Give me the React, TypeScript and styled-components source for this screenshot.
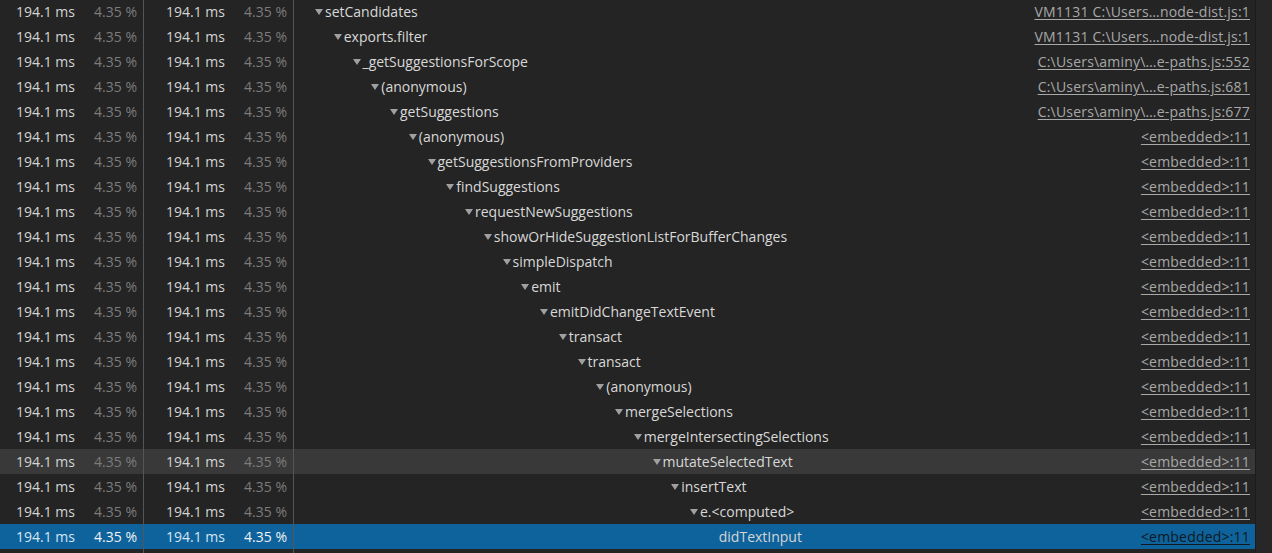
import React from 'react'
import styled, { createGlobalStyle, css } from 'styled-components'

const GlobalStyle = createGlobalStyle`
	html, body {
		margin: 0;
		padding: 0;
		background: #242424;
		overflow: hidden;
	}
	body {
		font-family: "Open Sans", "Noto Sans", "Liberation Sans", sans-serif;
		font-size: 14px;
	}
`

const INDENT = 18.75

type Frame = {
	name: string
	depth: number
	url: string
	leaf?: boolean
}

const VM = 'VM1131 C:\\Users…node-dist.js:1'
const PATHS = 'C:\\Users\\aminy\\…e-paths.js:'
const EMB = '<embedded>:11'

const frames: Frame[] = [
	{ name: 'setCandidates', depth: 0, url: VM },
	{ name: 'exports.filter', depth: 1, url: VM },
	{ name: '_getSuggestionsForScope', depth: 2, url: PATHS + '552' },
	{ name: '(anonymous)', depth: 3, url: PATHS + '681' },
	{ name: 'getSuggestions', depth: 4, url: PATHS + '677' },
	{ name: '(anonymous)', depth: 5, url: EMB },
	{ name: 'getSuggestionsFromProviders', depth: 6, url: EMB },
	{ name: 'findSuggestions', depth: 7, url: EMB },
	{ name: 'requestNewSuggestions', depth: 8, url: EMB },
	{ name: 'showOrHideSuggestionListForBufferChanges', depth: 9, url: EMB },
	{ name: 'simpleDispatch', depth: 10, url: EMB },
	{ name: 'emit', depth: 11, url: EMB },
	{ name: 'emitDidChangeTextEvent', depth: 12, url: EMB },
	{ name: 'transact', depth: 13, url: EMB },
	{ name: 'transact', depth: 14, url: EMB },
	{ name: '(anonymous)', depth: 15, url: EMB },
	{ name: 'mergeSelections', depth: 16, url: EMB },
	{ name: 'mergeIntersectingSelections', depth: 17, url: EMB },
	{ name: 'mutateSelectedText', depth: 18, url: EMB },
	{ name: 'insertText', depth: 19, url: EMB },
	{ name: 'e.<computed>', depth: 20, url: EMB },
	{ name: 'didTextInput', depth: 21, url: EMB, leaf: true },
]

const HOVER_ROW = 18
const SELECTED_ROW = 21

type RowState = 'normal' | 'hover' | 'selected'

const Panel = styled.div`
	display: flex;
	height: 553px;
	width: 1272px;
	background: #242424;
	color: #d0d0d0;
`

const Grid = styled.div`
	flex: 1;
	display: grid;
	grid-template-columns: 144px 150px 1fr;
	grid-auto-rows: 25px;
	align-content: start;
	margin-top: -1px;
	background:
		linear-gradient(#555555, #555555) 143px 0 / 1px 100% no-repeat,
		linear-gradient(#555555, #555555) 293px 0 / 1px 100% no-repeat,
		#242424;
`

const Row = styled.div<{ $state: RowState }>`
	display: contents;

	& > div {
		${({ $state }) =>
			$state === 'hover' &&
			css`
				background: #393939;
			`}
		${({ $state }) =>
			$state === 'selected' &&
			css`
				background: #0e639c;
			`}
	}
`

const TimeCell = styled.div<{ $state: RowState }>`
	display: flex;
	justify-content: flex-end;
	align-items: center;
	padding-right: 6px;
	line-height: 25px;
	border-right: 1px solid #555555;
	white-space: nowrap;
	color: ${({ $state }) => ($state === 'selected' ? '#d6e6f2' : '#d4d4d4')};
`

const Percent = styled.span<{ $state: RowState }>`
	display: inline-block;
	width: 62px;
	text-align: right;
	color: ${({ $state }) => ($state === 'selected' ? '#f2f2f2' : '#7c7c7c')};
`

const NameCell = styled.div<{ $depth: number }>`
	display: flex;
	align-items: center;
	line-height: 25px;
	padding-left: ${({ $depth }) => 21 + $depth * INDENT}px;
	padding-right: 5px;
	white-space: nowrap;
	overflow: hidden;
`

const Toggle = styled.span<{ $hidden?: boolean }>`
	display: inline-block;
	width: 10px;
	height: 25px;
	flex: none;
	visibility: ${({ $hidden }) => ($hidden ? 'hidden' : 'visible')};
	background: no-repeat 0 10px / 8px 6px
		url("data:image/svg+xml,%3Csvg xmlns='http://www.w3.org/2000/svg' viewBox='0 0 8 6'%3E%3Cpath d='M0 0h8L4 6z' fill='%23a0a0a0'/%3E%3C/svg%3E");
`

const FunctionName = styled.span<{ $state: RowState }>`
	color: ${({ $state }) => ($state === 'selected' ? '#d4d4d4' : '#d8d8d8')};
`

const Spacer = styled.span`
	flex: 1;
	min-width: 20px;
`

const SourceLink = styled.span<{ $state: RowState }>`
	text-decoration: underline;
	text-underline-offset: 2px;
	letter-spacing: 0.2px;
	color: ${({ $state }) => ($state === 'selected' ? '#101820' : '#a8a8a8')};
`

const ScrollTrack = styled.div`
	width: 16px;
	flex: none;
	background: #272727;
	border-left: 1px solid #1c1c1c;
`

export default function App() {
	return (
		<>
			<GlobalStyle />
			<Panel>
				<Grid>
					{frames.map((f, i) => {
						const state: RowState =
							i === SELECTED_ROW ? 'selected' : i === HOVER_ROW ? 'hover' : 'normal'
						return (
							<Row key={i} $state={state}>
								<TimeCell $state={state}>
									194.1 ms<Percent $state={state}>4.35 %</Percent>
								</TimeCell>
								<TimeCell $state={state}>
									194.1 ms<Percent $state={state}>4.35 %</Percent>
								</TimeCell>
								<NameCell $depth={f.depth}>
									<Toggle $hidden={f.leaf} />
									<FunctionName $state={state}>{f.name}</FunctionName>
									<Spacer />
									<SourceLink $state={state}>{f.url}</SourceLink>
								</NameCell>
							</Row>
						)
					})}
				</Grid>
				<ScrollTrack />
			</Panel>
		</>
	)
}
